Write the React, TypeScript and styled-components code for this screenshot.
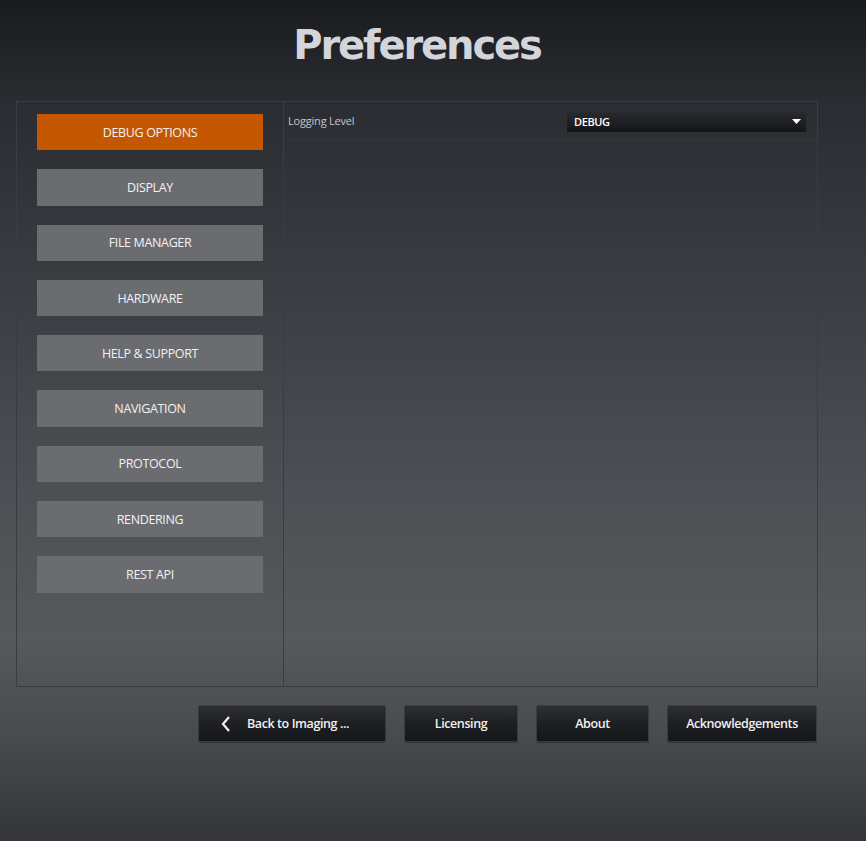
import React from "react";
import styled, { createGlobalStyle } from "styled-components";

const Global = createGlobalStyle`
  html, body { margin: 0; padding: 0; height: 100%; }
  body {
    font-family: "DejaVu Sans", Verdana, sans-serif;
    background: #1b1c20;
  }
  #root { height: 100%; }
`;

const Page = styled.div`
  width: 866px;
  height: 841px;
  box-sizing: border-box;
  background: linear-gradient(
    to bottom,
    #1a1b1f 0px,
    #2b2c31 100px,
    #3d3e43 300px,
    #4f5055 500px,
    #57585c 640px,
    #4c4d51 720px,
    #3f4044 790px,
    #343539 841px
  );
  display: flex;
  flex-direction: column;
  padding: 0 49px 0 16px;
`;

const Title = styled.h1`
  margin: 0;
  height: 101px;
  box-sizing: border-box;
  padding-top: 20px;
  text-align: center;
  font-family: "DejaVu Sans", Verdana, sans-serif;
  font-weight: bold;
  font-size: 40px;
  line-height: 50px;
  color: #d2d5da;
  letter-spacing: -2.1px;
  width: 802px;
`;

const Panel = styled.div`
  display: flex;
  width: 802px;
  height: 586px;
  box-sizing: border-box;
  border: 1px solid #3b3c41;
`;

const Sidebar = styled.nav`
  width: 267px;
  box-sizing: border-box;
  border-right: 1px solid #3b3c41;
  padding: 12px 20px 0 20px;
  display: flex;
  flex-direction: column;
  gap: 19px;
`;

const NavButton = styled.div<{ $active?: boolean }>`
  height: 36.3px;
  width: 226px;
  box-sizing: border-box;
  display: flex;
  align-items: center;
  justify-content: center;
  background: ${(p) => (p.$active ? "#c45700" : "#6b6c70")};
  color: #f2f2f2;
  font-family: "Open Sans", sans-serif;
  font-size: 12.5px;
  letter-spacing: -0.35px;
  white-space: pre;
  flex-shrink: 0;
`;

const Content = styled.div`
  flex: 1;
  display: flex;
  flex-direction: column;
`;

const SettingRow = styled.div`
  height: 38px;
  box-sizing: border-box;
  display: flex;
  align-items: center;
  justify-content: space-between;
  padding: 0 10px 0 4px;
  border-bottom: 1px solid rgba(255, 255, 255, 0.03);
`;

const Label = styled.span`
  font-family: "Open Sans", sans-serif;
  font-size: 11px;
  color: #c4c6ca;
  letter-spacing: -0.2px;
`;

const Select = styled.div`
  width: 241px;
  height: 22px;
  margin-top: 2px;
  box-sizing: border-box;
  border: 1px solid #2e2f33;
  background: linear-gradient(to bottom, #2a2b30 0%, #141518 100%);
  display: flex;
  align-items: center;
  justify-content: space-between;
  padding: 0 5px 0 7px;
  color: #ffffff;
  font-family: "Open Sans", sans-serif;
  font-size: 11px;
  font-weight: 600;
  letter-spacing: -0.4px;
`;

const Footer = styled.div`
  display: flex;
  justify-content: flex-end;
  gap: 18px;
  padding-top: 18px;
  padding-right: 1px;
  width: 802px;
  box-sizing: border-box;
`;

const FooterButton = styled.div<{ $w: number }>`
  width: ${(p) => p.$w}px;
  height: 37px;
  box-sizing: border-box;
  border: 1px solid #3a3b3f;
  border-radius: 2px;
  background: linear-gradient(to bottom, #2e2f34 0%, #1d1e22 55%, #151619 100%);
  box-shadow: 0 1px 0 rgba(0, 0, 0, 0.3);
  display: flex;
  align-items: center;
  justify-content: center;
  gap: 16px;
  color: #f0f0f0;
  font-family: "Open Sans", sans-serif;
  font-weight: 600;
  font-size: 12.5px;
  letter-spacing: -0.4px;
`;

const Chevron = () => (
  <svg width="10" height="16" viewBox="0 0 10 16" style={{ marginLeft: -14 }}>
    <path d="M8 1 L2 8 L8 15" fill="none" stroke="#f0f0f0" strokeWidth="2.2" />
  </svg>
);

const Caret = () => (
  <svg width="9" height="5" viewBox="0 0 9 5">
    <path d="M0 0 H9 L4.5 5 Z" fill="#ffffff" />
  </svg>
);

const items = [
  "DEBUG OPTIONS",
  "DISPLAY",
  "FILE MANAGER",
  "HARDWARE",
  "HELP & SUPPORT",
  "NAVIGATION",
  "PROTOCOL",
  "RENDERING",
  "REST API",
];

export default function App() {
  return (
    <>
      <Global />
      <Page>
        <Title>Preferences</Title>
        <Panel>
          <Sidebar>
            {items.map((it, i) => (
              <NavButton key={it} $active={i === 0}>
                {it}
              </NavButton>
            ))}
          </Sidebar>
          <Content>
            <SettingRow>
              <Label>Logging Level</Label>
              <Select>
                <span>DEBUG</span>
                <Caret />
              </Select>
            </SettingRow>
          </Content>
        </Panel>
        <Footer>
          <FooterButton $w={188}>
            <Chevron />
            <span>Back to Imaging ...</span>
          </FooterButton>
          <FooterButton $w={114}>Licensing</FooterButton>
          <FooterButton $w={113}>About</FooterButton>
          <FooterButton $w={150}>Acknowledgements</FooterButton>
        </Footer>
      </Page>
    </>
  );
}
